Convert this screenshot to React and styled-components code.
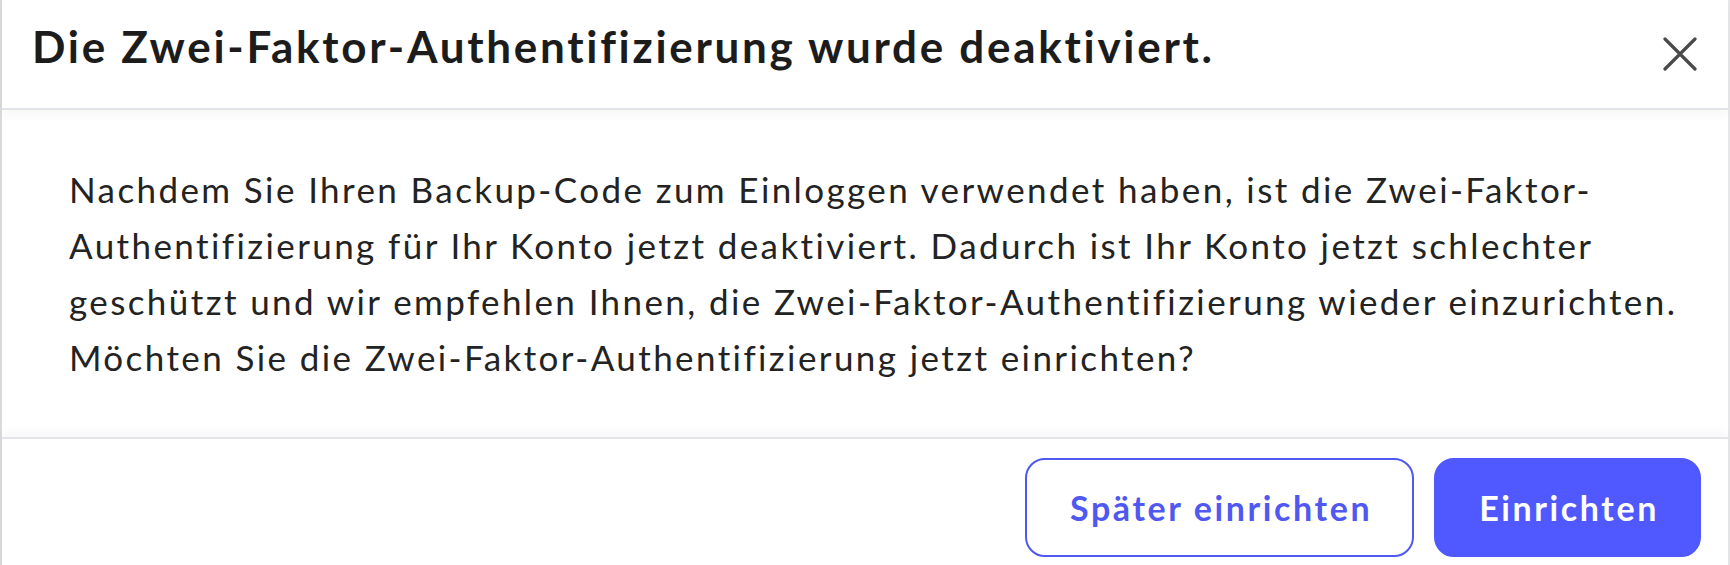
import styled, { createGlobalStyle } from 'styled-components';

const GlobalStyle = createGlobalStyle`
    html, body {
        margin: 0;
        padding: 0;
        background: #ffffff;
    }
    body {
        font-family: Lato, "Open Sans", "Liberation Sans", sans-serif;
    }
`;

function App() {
    return (
        <>
            <GlobalStyle />
            <Modal>
                <Header>
                    <Title>Die Zwei-Faktor-Authentifizierung wurde deaktiviert.</Title>
                    <CloseButton aria-label="Schließen">
                        <svg width="34" height="34" viewBox="0 0 34 34" fill="none">
                            <path d="M2 2 L32 32 M32 2 L2 32" stroke="#4a4b48" strokeWidth="3.2" strokeLinecap="round" />
                        </svg>
                    </CloseButton>
                </Header>
                <Body>
                    <Text>
                        Nachdem Sie Ihren Backup-Code zum Einloggen verwendet haben, ist die Zwei-Faktor-<br />
                        Authentifizierung für Ihr Konto jetzt deaktiviert. Dadurch ist Ihr Konto jetzt schlechter<br />
                        geschützt und wir empfehlen Ihnen, die Zwei-Faktor-Authentifizierung wieder einzurichten.<br />
                        Möchten Sie die Zwei-Faktor-Authentifizierung jetzt einrichten?
                    </Text>
                </Body>
                <Footer>
                    <Button $variant="secondary">Später einrichten</Button>
                    <Button $variant="primary">Einrichten</Button>
                </Footer>
            </Modal>
        </>
    );
}

const Modal = styled.div`
    display: flex;
    flex-direction: column;
    width: 100%;
    box-sizing: border-box;
    border-left: 2px solid #d9dadc;
    border-right: 2px solid #e6e7e9;
    background: #ffffff;
`;

const Header = styled.div`
    position: relative;
    z-index: 1;
    display: flex;
    align-items: center;
    justify-content: space-between;
    height: 108px;
    padding: 0 31px 0 30px;
    border-bottom: 2px solid #e1e4e8;
    box-shadow: 0 5px 10px rgba(20, 30, 60, 0.035);
`;

const Title = styled.h1`
    margin: 0;
    padding-bottom: 16px;
    font-family: Lato, "Liberation Sans", sans-serif;
    font-size: 44px;
    font-weight: 700;
    color: #1c1c1c;
    letter-spacing: 2.7px;
`;

const CloseButton = styled.button`
    display: flex;
    align-items: center;
    justify-content: center;
    padding: 0;
    border: none;
    background: none;
    cursor: pointer;
`;

const Body = styled.div`
    padding: 51px 40px 52px 67px;
`;

const Text = styled.p`
    margin: 0;
    font-family: Lato, "Liberation Sans", sans-serif;
    font-size: 35px;
    line-height: 56px;
    color: #232323;
    letter-spacing: 2.4px;
    white-space: nowrap;
`;

const Footer = styled.div`
    position: relative;
    z-index: 1;
    display: flex;
    justify-content: flex-end;
    gap: 20px;
    padding: 19px 27px 21px;
    border-top: 2px solid #e3e5ea;
    box-shadow: 0 -5px 10px rgba(20, 30, 60, 0.035);
`;

const Button = styled.button`
    height: 99px;
    padding: 0 40px 0 43px;
    box-sizing: border-box;
    border-radius: 20px;
    font-family: Lato, "Liberation Sans", sans-serif;
    font-size: 34px;
    font-weight: 700;
    letter-spacing: 2.6px;
    cursor: pointer;
    border: 2px solid #4f58f0;
    background: ${p => (p.$variant === 'primary' ? '#4f59ff' : '#ffffff')};
    color: ${p => (p.$variant === 'primary' ? '#ffffff' : '#4f58f0')};
    border-color: ${p => (p.$variant === 'primary' ? '#4f59ff' : '#4f58f0')};
`;

export default App;
